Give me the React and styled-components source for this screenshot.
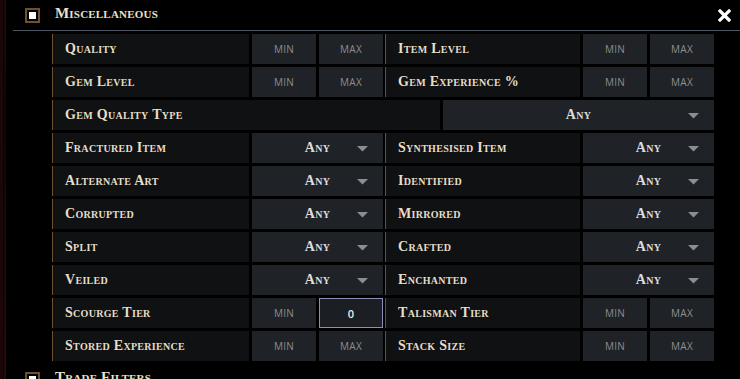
import styled, { createGlobalStyle } from 'styled-components';

const Global = createGlobalStyle`
  html, body {
    margin: 0;
    padding: 0;
    background: #000;
  }
  body {
    width: 740px;
    height: 379px;
    overflow: hidden;
  }
`

const rows = [
  { left: { label: 'Quality', kind: 'range' }, right: { label: 'Item Level', kind: 'range' } },
  { left: { label: 'Gem Level', kind: 'range' }, right: { label: 'Gem Experience %', kind: 'range' } },
  { full: { label: 'Gem Quality Type' } },
  { left: { label: 'Fractured Item', kind: 'select' }, right: { label: 'Synthesised Item', kind: 'select' } },
  { left: { label: 'Alternate Art', kind: 'select' }, right: { label: 'Identified', kind: 'select' } },
  { left: { label: 'Corrupted', kind: 'select' }, right: { label: 'Mirrored', kind: 'select' } },
  { left: { label: 'Split', kind: 'select' }, right: { label: 'Crafted', kind: 'select' } },
  { left: { label: 'Veiled', kind: 'select' }, right: { label: 'Enchanted', kind: 'select' } },
  { left: { label: 'Scourge Tier', kind: 'range', max: '0' }, right: { label: 'Talisman Tier', kind: 'range' } },
  { left: { label: 'Stored Experience', kind: 'range' }, right: { label: 'Stack Size', kind: 'range' } },
]

function Checkbox() {
  return (
    <Box>
      <Tick />
    </Box>
  )
}

function Arrow() {
  return (
    <ArrowIcon width="11" height="6" viewBox="0 0 11 6">
      <path d="M0 0 H11 L5.5 5.5 Z" fill="#8b8d90" />
    </ArrowIcon>
  )
}

function Half({ data }) {
  return (
    <HalfGrid>
      <Label>{data.label}</Label>
      {data.kind === 'range' ? (
        <>
          <Cell>min</Cell>
          <Cell $active={!!data.max}>{data.max || 'max'}</Cell>
        </>
      ) : (
        <Select $span>
          Any
          <Arrow />
        </Select>
      )}
    </HalfGrid>
  )
}

export default function App() {
  return (
    <Page>
      <Global />
      <Section>
        <Header>
          <Checkbox />
          <Title>Miscellaneous</Title>
          <Close width="13" height="13" viewBox="0 0 13 13">
            <path d="M2 2 L11 11 M11 2 L2 11" stroke="#fff" strokeWidth="3.2" strokeLinecap="square" />
          </Close>
        </Header>
        <Body>
          {rows.map((r, i) =>
            r.full ? (
              <FullRow key={i}>
                <Label>{r.full.label}</Label>
                <Select>
                  Any
                  <Arrow />
                </Select>
              </FullRow>
            ) : (
              <Row key={i}>
                <Half data={r.left} />
                <Half data={r.right} />
              </Row>
            )
          )}
        </Body>
      </Section>
      <Section>
        <Header $plain>
          <Checkbox />
          <Title>Trade Filters</Title>
        </Header>
      </Section>
    </Page>
  )
}

const Page = styled.div`
  height: 379px;
  overflow: hidden;
  background: #000;
  border-left: 3px solid #1a0707;
  box-shadow: inset 1px 0 0 #0b0303;
  background-image: linear-gradient(180deg, #220909 0%, #120404 30%, #1c0707 60%, #2a0a0a 100%);
  background-size: 3px 100%;
  background-repeat: no-repeat;
  font-family: 'Liberation Serif', serif;
`

const Section = styled.div`
  display: flex;
  flex-direction: column;
`

const Header = styled.div`
  height: 30px;
  margin-left: 10px;
  display: flex;
  align-items: flex-start;
  border-bottom: 1px solid ${p => p.$plain ? 'transparent' : '#4e5563'};
  position: relative;
`

const Box = styled.div`
  width: 11px;
  height: 11px;
  margin: 8px 0 0 12px;
  border: 2px solid #6e5130;
  background: #000;
  display: flex;
  align-items: center;
  justify-content: center;
`

const Tick = styled.div`
  width: 7px;
  height: 7px;
  background: #fff;
`

const Title = styled.div`
  margin: 5px 0 0 15px;
  font-family: 'Liberation Serif', serif;
  font-variant: small-caps;
  font-weight: bold;
  font-size: 15px;
  letter-spacing: 0.2px;
  color: #e9e1cb;
`

const Close = styled.svg`
  position: absolute;
  right: 9px;
  top: 9px;
`

const Body = styled.div`
  display: flex;
  flex-direction: column;
  gap: 3px;
  padding: 3px 0 3px 49px;
  width: 662px;
`

const Row = styled.div`
  display: grid;
  grid-template-columns: 331px 329px;
  column-gap: 2px;
  height: 30px;
`

const FullRow = styled.div`
  display: grid;
  grid-template-columns: 388px 271px;
  column-gap: 3px;
  height: 30px;
`

const HalfGrid = styled.div`
  display: grid;
  grid-template-columns: 1fr 64px 64px;
  column-gap: 3px;
`

const Label = styled.div`
  background: #0f1113;
  border-left: 1px solid #6d5130;
  padding-left: 12px;
  display: flex;
  align-items: center;
  font-family: 'Liberation Serif', serif;
  font-variant: small-caps;
  font-weight: bold;
  font-size: 14px;
  letter-spacing: 0.3px;
  color: #e6dec8;
`

const Cell = styled.div`
  background: ${p => p.$active ? '#1b1e22' : '#1f2226'};
  border: 1px solid ${p => p.$active ? '#8d8fb8' : 'transparent'};
  display: flex;
  align-items: center;
  justify-content: center;
  font-family: 'Open Sans', sans-serif;
  font-size: ${p => p.$active ? '11px' : '10px'};
  text-transform: ${p => p.$active ? 'none' : 'uppercase'};
  font-weight: ${p => p.$active ? 600 : 400};
  color: ${p => p.$active ? '#eeeeee' : '#8d8e8f'};
  letter-spacing: 0.3px;
`

const Select = styled.div`
  grid-column: ${p => p.$span ? 'span 2' : 'auto'};
  position: relative;
  background: #1f2226;
  display: flex;
  align-items: center;
  justify-content: center;
  font-family: 'Liberation Serif', serif;
  font-variant: small-caps;
  font-weight: bold;
  font-size: 14px;
  color: #dcdcdc;
  letter-spacing: 0.3px;
`

const ArrowIcon = styled.svg`
  position: absolute;
  right: 15px;
  top: 13px;
`
